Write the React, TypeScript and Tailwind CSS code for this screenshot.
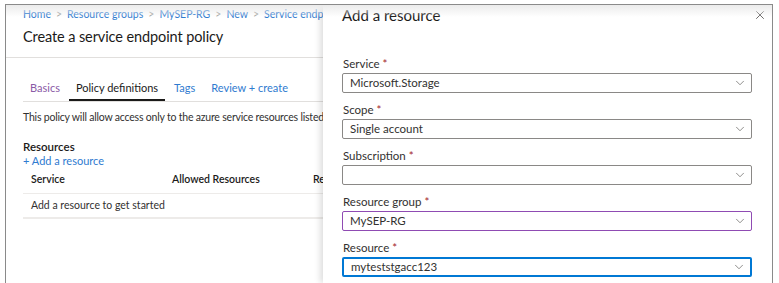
import { ChevronDown, X } from "lucide-react";

const crumbs = ["Home", "Resource groups", "MySEP-RG", "New", "Service endpoint policy"];

const fields = [
  { label: "Service", value: "Microsoft.Storage", border: "border border-[#8a8886]" },
  { label: "Scope", value: "Single account", border: "border border-[#8a8886]" },
  { label: "Subscription", value: "", border: "border border-[#8a8886]" },
  { label: "Resource group", value: "MySEP-RG", border: "border border-[#8f4bb3]" },
  { label: "Resource", value: "myteststgacc123", border: "border-2 border-[#0078d4]" },
];

function Select({ value, border }: { value: string; border: string }) {
  return (
    <div
      className={`h-[20px] flex items-center justify-between rounded-[2px] bg-white pl-[7px] pr-[4px] ${border}`}
    >
      <span className="text-[11.5px] text-[#323130] leading-none">{value}</span>
      <ChevronDown className="w-[14px] h-[14px] text-[#605e5c]" strokeWidth={1.2} />
    </div>
  );
}

export default function App() {
  return (
    <div className="w-[779px] h-[283px] bg-white pt-[4px] pl-[5px] font-['Segoe_UI','Lato',sans-serif] text-[#323130]">
      <div className="relative w-[768px] h-[279px] border-l border-t border-r border-[#8a8a8a] flex overflow-hidden">
        {/* top shade */}
        <div className="pointer-events-none absolute inset-x-0 top-0 h-[12px] bg-linear-to-b from-[#ebebeb] to-transparent z-20" />

        {/* Left blade */}
        <div className="w-[317px] shrink-0 overflow-hidden">
          <div className="pl-[17px] h-[20px] flex items-center gap-[5px] whitespace-nowrap text-[10.5px] text-[#2f7bd0]">
            {crumbs.map((c, i) => (
              <span key={c} className="flex items-center gap-[5px] shrink-0">
                {i > 0 && <span className="text-[#a19f9d]">&gt;</span>}
                <span>{c}</span>
              </span>
            ))}
          </div>
          <div className="pl-[17px] h-[24px] flex items-center text-[14.5px] tracking-[-0.1px] text-[#1b1a19] whitespace-nowrap">
            Create a service endpoint policy
          </div>
          <div className="h-[9px] border-b border-[#e1dfdd]" />

          <div className="pl-[17px] pt-[22px]">
            <div className="w-[320px] flex items-end gap-[2px] border-b border-[#e1dfdd] text-[11px] leading-[16px] whitespace-nowrap">
              <div className="px-[7px] pb-[5px] text-[#8a5aa6]">Basics</div>
              <div className="px-[7px] pb-[3px] border-b-2 border-[#1b1a19] text-[#1b1a19]">Policy definitions</div>
              <div className="px-[7px] pb-[5px] text-[#2f7bd0]">Tags</div>
              <div className="px-[7px] pb-[5px] text-[#2f7bd0]">Review + create</div>
            </div>
            <div className="mt-[8px] text-[10.5px] tracking-[-0.2px] leading-[14px] whitespace-nowrap">
              This policy will allow access only to the azure service resources listed below
            </div>
            <div className="mt-[16px] text-[11.5px] font-semibold text-[#1b1a19] leading-[14px]">Resources</div>
            <div className="text-[11px] text-[#2f7bd0] leading-[13px] whitespace-nowrap">+ Add a resource</div>
            <div className="w-[320px] text-[10.5px] whitespace-nowrap">
              <div className="h-[27px] flex items-center pl-[8px] border-b border-[#edebe9] font-semibold text-[#1b1a19]">
                <span className="w-[141px] shrink-0">Service</span>
                <span className="w-[141px] shrink-0">Allowed Resources</span>
                <span className="shrink-0">Resource group</span>
              </div>
              <div className="h-[25px] flex items-center pl-[8px] border-b-2 border-[#edebe9]">
                Add a resource to get started
              </div>
            </div>
          </div>
        </div>

        {/* Right panel */}
        <div className="relative z-10 flex-1 bg-white shadow-[-3px_0_6px_rgba(0,0,0,0.13)] pl-[19px] pr-[20px]">
          <div className="h-[20px] flex items-center justify-between">
            <span className="text-[15px] text-[#1b1a19] whitespace-nowrap">Add a resource</span>
            <X className="w-[14px] h-[14px] -mr-[15px] text-[#605e5c]" strokeWidth={1.6} />
          </div>
          <div className="pt-[32px] flex flex-col gap-[10px]">
            {fields.map((f) => (
              <div key={f.label} className="flex flex-col gap-[2px]">
                <div className="text-[11.5px] text-[#323130] leading-[14px] pl-[1px]">
                  {f.label} <span className="text-[#a4262c]">*</span>
                </div>
                <Select value={f.value} border={f.border} />
              </div>
            ))}
          </div>
        </div>
      </div>
    </div>
  );
}
